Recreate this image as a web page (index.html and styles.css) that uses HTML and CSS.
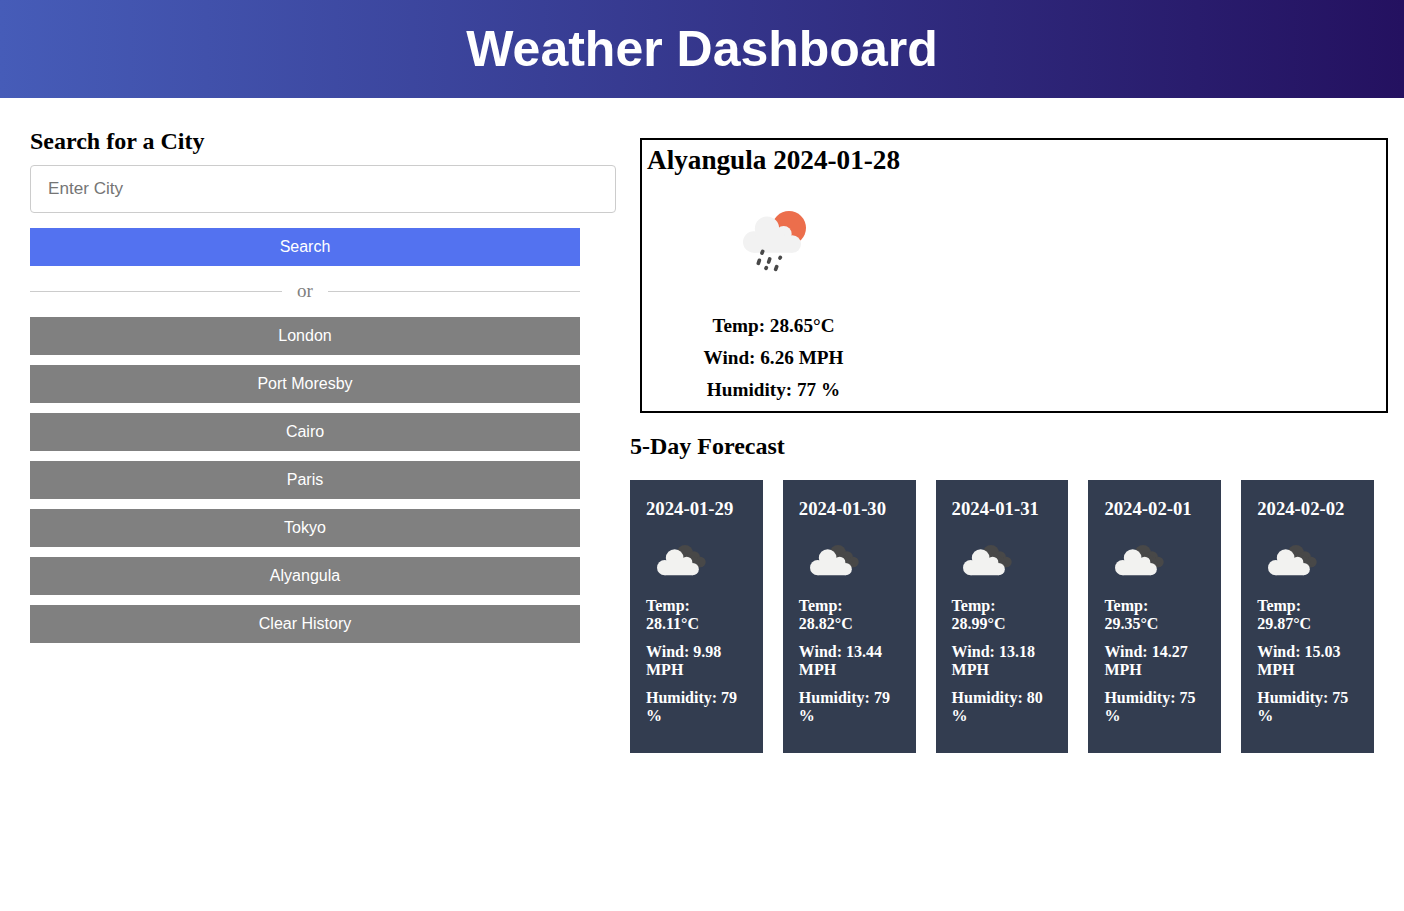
FILE: index.html
```html
<!DOCTYPE html>
<html lang="en">
<head>
<meta charset="utf-8">
<title>Weather Dashboard</title>
<link rel="stylesheet" href="styles.css">
</head>
<body>
<svg class="symbols" width="0" height="0">
  <symbol id="clouds" viewBox="0 0 240 180">
    <g fill="#484848">
      <circle cx="135" cy="69" r="24"/><circle cx="162" cy="82" r="18"/><circle cx="181" cy="96" r="16"/>
      <path d="M135 69L175 85L181 112L150 112Z"/>
    </g>
    <g fill="#f2f2f0">
      <circle cx="74" cy="113" r="23"/><circle cx="104" cy="84" r="26.500"/><circle cx="140" cy="97" r="17"/><circle cx="158" cy="117.500" r="18.500"/>
      <path d="M74 136V100L104 84L140 97L158 117V136Z"/>
    </g>
  </symbol>
</svg>
<header class="header"><h1>Weather Dashboard</h1></header>
<main class="container">
  <section class="search">
    <h2>Search for a City</h2>
    <input class="city-input" type="text" placeholder="Enter City">
    <button class="btn btn-search">Search</button>
    <div class="separator"><span>or</span></div>
    <div class="history">
      <button class="btn">London</button>
      <button class="btn">Port Moresby</button>
      <button class="btn">Cairo</button>
      <button class="btn">Paris</button>
      <button class="btn">Tokyo</button>
      <button class="btn">Alyangula</button>
      <button class="btn">Clear History</button>
    </div>
  </section>
  <section class="weather">
    <div class="current">
      <h2>Alyangula 2024-01-28</h2>
      <div class="details">
        <svg class="rain" viewBox="0 0 270 240">
          <circle cx="177" cy="84" r="51" fill="#ec6e4c"/>
          <g fill="#f2f2f2">
            <circle cx="71" cy="126" r="32"/><circle cx="111" cy="86" r="36.500"/><circle cx="161" cy="102" r="24"/><circle cx="187" cy="132" r="26"/>
            <path d="M71 158V110L111 86L161 102L187 132V158Z"/>
          </g>
          <g stroke="#484848" stroke-width="11" stroke-linecap="round">
            <path d="M98 154l-2 5M88 181l-3 9M119 177l-3 9M151 172l-1 2M109 203l-1 2M140 200l-3 8"/>
          </g>
        </svg>
        <h4>Temp: 28.65°C</h4>
        <h4>Wind: 6.26 MPH</h4>
        <h4>Humidity: 77 %</h4>
      </div>
    </div>
    <h2 class="forecast-title">5-Day Forecast</h2>
    <ul class="cards">
      <li class="card"><h3>2024-01-29</h3><svg><use href="#clouds"/></svg><h4>Temp: 28.11°C</h4><h4>Wind: 9.98 MPH</h4><h4>Humidity: 79 %</h4></li>
      <li class="card"><h3>2024-01-30</h3><svg><use href="#clouds"/></svg><h4>Temp: 28.82°C</h4><h4>Wind: 13.44 MPH</h4><h4>Humidity: 79 %</h4></li>
      <li class="card"><h3>2024-01-31</h3><svg><use href="#clouds"/></svg><h4>Temp: 28.99°C</h4><h4>Wind: 13.18 MPH</h4><h4>Humidity: 80 %</h4></li>
      <li class="card"><h3>2024-02-01</h3><svg><use href="#clouds"/></svg><h4>Temp: 29.35°C</h4><h4>Wind: 14.27 MPH</h4><h4>Humidity: 75 %</h4></li>
      <li class="card"><h3>2024-02-02</h3><svg><use href="#clouds"/></svg><h4>Temp: 29.87°C</h4><h4>Wind: 15.03 MPH</h4><h4>Humidity: 75 %</h4></li>
    </ul>
  </section>
</main>
</body>
</html>
```
FILE: styles.css
```css
* { margin: 0; padding: 0; }
body { background: #fff; font-family: "Liberation Serif", "Times New Roman", serif; }
.symbols { display: none; }
.header {
  height: 98px;
  display: flex;
  align-items: center;
  justify-content: center;
  background: linear-gradient(to right, #465cb8, #241160);
  color: #fff;
  font-family: "Liberation Sans", Arial, sans-serif;
}
.header h1 { font-size: 50px; line-height: 58px; }
.container { display: flex; gap: 50px; padding: 30px 16px 30px 30px; }
.search { width: 550px; flex: none; }
.search h2 { font-size: 24px; line-height: 27px; margin-bottom: 10px; }
.city-input {
  display: block;
  box-sizing: border-box;
  width: 586px;
  height: 48px;
  padding: 0 17px;
  border: 1px solid #ccc;
  border-radius: 4px;
  font: 17.12px "Liberation Sans", Arial, sans-serif;
}
.city-input::placeholder { color: #757575; }
.btn {
  display: block;
  width: 100%;
  height: 38px;
  border: none;
  background: #808080;
  color: #fff;
  font: 16px "Liberation Sans", Arial, sans-serif;
}
.btn-search { margin-top: 15px; background: #5372f0; }
.separator {
  display: flex;
  align-items: center;
  gap: 15px;
  height: 21px;
  margin: 15px 0;
  color: #808080;
  font-size: 19px;
}
.separator span { padding-bottom: 2px; }
.separator::before, .separator::after { content: ""; flex: 1; height: 1px; background: #ccc; }
.history { display: flex; flex-direction: column; gap: 10px; }
.weather { flex: 1; }
.current {
  box-sizing: border-box;
  height: 275px;
  margin: 10px 0 0 10px;
  padding: 5px;
  border: 2px solid #000;
}
.current h2 { font-size: 27.2px; line-height: 31px; }
.details { width: 253px; text-align: center; }
.rain { display: block; width: 90px; height: 80px; margin: 24px auto 35px 83px; }
.details h4 { font-size: 19.2px; line-height: 22px; margin-bottom: 10px; }
.forecast-title { font-size: 24px; line-height: 27px; margin: 20px 0; }
.cards { display: grid; grid-template-columns: repeat(5, 1fr); gap: 20px; margin-right: 14px; list-style: none; }
.card { box-sizing: border-box; height: 273px; padding: 18px 16px; background: #333d50; color: #fff; }
.card h3 { font-size: 18.72px; line-height: 22px; }
.card svg { display: block; width: 80px; height: 60px; margin: 10px 0 7px -6px; }
.card h4 { font-size: 16px; line-height: 18px; margin-bottom: 10px; }
```
